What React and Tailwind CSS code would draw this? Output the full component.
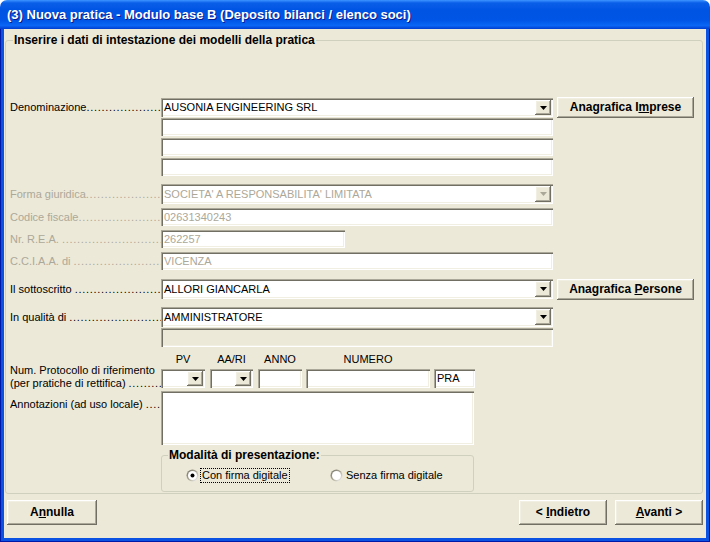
import React from "react";

const dots = ".".repeat(60);

const sunken =
  "shadow-[inset_1px_1px_0_#aca899,inset_2px_2px_0_#716f64,inset_-1px_-1px_0_#ffffff,inset_-2px_-2px_0_#f1efe2]";
const raised =
  "bg-[#ece9d8] shadow-[inset_-1px_-1px_0_#716f64,inset_1px_1px_0_#ffffff,inset_-2px_-2px_0_#aca899,inset_2px_2px_0_#f1efe2]";

const Label = ({ children, disabled }) => (
  <div
    className={`w-[151px] shrink-0 overflow-hidden whitespace-nowrap ${
      disabled ? "text-[#aca899]" : "text-black"
    }`}
  >
    {children}
    <span className="tracking-[0.7px]">{dots}</span>
  </div>
);

const Input = ({ className = "", value, disabled }) => (
  <div
    className={`flex items-center overflow-hidden whitespace-nowrap pl-[3px] ${sunken} ${
      disabled ? "text-[#aca899]" : "text-black"
    } ${className}`}
  >
    {value}
  </div>
);

const DropBtn = ({ disabled }) => (
  <div className={`flex w-[16px] shrink-0 items-center justify-center ${raised}`}>
    <svg width="7" height="4" viewBox="0 0 7 4">
      <polygon points="0,0 7,0 3.5,4" fill={disabled ? "#aca899" : "#000000"} />
    </svg>
  </div>
);

const Combo = ({ className = "", value, disabled }) => (
  <div className={`flex items-stretch bg-white p-[2px] ${sunken} ${className}`}>
    <div
      className={`flex min-w-0 flex-1 items-center overflow-hidden whitespace-nowrap pl-[1px] ${
        disabled ? "text-[#aca899]" : "text-black"
      }`}
    >
      {value}
    </div>
    <DropBtn disabled={disabled} />
  </div>
);

const Button = ({ className = "", children }) => (
  <button
    className={`flex items-center justify-center whitespace-pre text-[12px] font-bold text-black ${raised} ${className}`}
  >
    <span>{children}</span>
  </button>
);

const Radio = ({ checked }) => (
  <svg width="13" height="13" viewBox="0 0 13 13" className="shrink-0">
    <defs>
      <linearGradient id={checked ? "rg1" : "rg2"} x1="0" y1="0" x2="1" y2="1">
        <stop offset="0" stopColor="#716f64" />
        <stop offset="0.5" stopColor="#aca899" />
        <stop offset="1" stopColor="#ffffff" />
      </linearGradient>
    </defs>
    <circle cx="6.5" cy="6.5" r="6" fill={`url(#${checked ? "rg1" : "rg2"})`} />
    <circle cx="6.5" cy="6.5" r="4.5" fill="#ffffff" />
    {checked && <circle cx="6.5" cy="6.5" r="2" fill="#000000" />}
  </svg>
);

const Spacer = () => <div className="w-[151px] shrink-0" />;

export default function App() {
  return (
    <div className="flex h-[542px] w-[710px] flex-col font-['Liberation_Sans',Arial,sans-serif] text-[11px] leading-[13px]">
      {/* title bar */}
      <div className="flex h-[29px] shrink-0 items-center rounded-t-[7px] bg-[linear-gradient(to_bottom,#3d95ff_0%,#0a5fe8_10%,#0054e3_35%,#0055e6_70%,#0a66f5_88%,#003dd0_100%)] pl-[7px] text-[13px] font-bold text-white [text-shadow:1px_1px_0_#0a1a8a]">
        (3) Nuova pratica - Modulo base B (Deposito bilanci / elenco soci)
      </div>

      <div className="flex flex-1 bg-[#0b52e3] px-[4px] pb-[4px] shadow-[inset_1px_0_0_#0019a6,inset_-1px_0_0_#0019a6,inset_0_-1px_0_#0019a6]">
        <div className="flex flex-1 flex-col bg-[#ece9d8]">
          <fieldset className="ml-[1px] mt-[5px] h-[460px] w-[698px] rounded-[3px] border border-[#d0d0bf] pl-[4px] pt-[51px]">
            <legend className="ml-[3px] px-[1px] text-[12px] font-bold leading-[13px]">
              Inserire i dati di intestazione dei modelli della pratica
            </legend>

            {/* Denominazione */}
            <div className="flex h-[19px] items-center">
              <Label>Denominazione</Label>
              <Combo className="h-[19px] w-[392px]" value="AUSONIA ENGINEERING SRL" />
              <Button className="ml-[4px] h-[21px] w-[137px]">
                Anagrafica I<span className="underline">m</span>prese
              </Button>
            </div>
            <div className="mt-[1px] flex">
              <Spacer />
              <Input className="h-[18px] w-[392px] bg-white" />
            </div>
            <div className="mt-[2px] flex">
              <Spacer />
              <Input className="h-[18px] w-[392px] bg-white" />
            </div>
            <div className="mt-[2px] flex">
              <Spacer />
              <Input className="h-[18px] w-[392px] bg-white" />
            </div>

            {/* disabled company data */}
            <div className="mt-[8px] flex h-[20px] items-center">
              <Label disabled>Forma giuridica</Label>
              <Combo disabled className="h-[20px] w-[392px]" value="SOCIETA' A RESPONSABILITA' LIMITATA" />
            </div>
            <div className="mt-[4px] flex h-[18px] items-center">
              <Label disabled>Codice fiscale</Label>
              <Input disabled className="h-[18px] w-[392px] bg-white" value="02631340243" />
            </div>
            <div className="mt-[4px] flex h-[18px] items-center">
              <Label disabled>Nr. R.E.A. </Label>
              <Input disabled className="h-[18px] w-[184px] bg-white" value="262257" />
            </div>
            <div className="mt-[4px] flex h-[18px] items-center">
              <Label disabled>C.C.I.A.A. di </Label>
              <Input disabled className="h-[18px] w-[392px] bg-white" value="VICENZA" />
            </div>

            {/* sottoscritto */}
            <div className="mt-[9px] flex h-[20px] items-center">
              <Label>Il sottoscritto </Label>
              <Combo className="h-[20px] w-[392px]" value="ALLORI GIANCARLA" />
              <Button className="ml-[4px] h-[21px] w-[137px]">
                Anagrafica <span className="underline">P</span>ersone
              </Button>
            </div>
            <div className="mt-[8px] flex h-[20px] items-center">
              <Label>In qualità di </Label>
              <Combo className="h-[20px] w-[392px]" value="AMMINISTRATORE" />
            </div>
            <div className="mt-[1px] flex">
              <Spacer />
              <Input className="h-[19px] w-[392px] bg-[#ece9d8]" />
            </div>

            {/* protocollo */}
            <div className="mt-[6px] flex items-end">
              <div className="-mb-[2px] w-[151px] shrink-0 overflow-hidden whitespace-nowrap">
                <div>Num. Protocollo di riferimento</div>
                <div>
                  (per pratiche di rettifica) <span className="tracking-[0.7px]">{dots}</span>
                </div>
              </div>
              <div className="flex flex-col">
                <div className="flex h-[12px] items-center text-center leading-[12px]">
                  <div className="w-[44px]">PV</div>
                  <div className="ml-[5px] w-[43px]">AA/RI</div>
                  <div className="ml-[5px] w-[44px]">ANNO</div>
                  <div className="ml-[4px] w-[124px]">NUMERO</div>
                  <div className="ml-[4px] w-[41px]" />
                </div>
                <div className="mt-[4px] flex h-[19px]">
                  <Combo className="h-[19px] w-[44px]" />
                  <Combo className="ml-[5px] h-[19px] w-[43px]" />
                  <Input className="ml-[5px] h-[19px] w-[44px] bg-white" />
                  <Input className="ml-[4px] h-[19px] w-[124px] bg-white" />
                  <Input className="ml-[4px] h-[19px] w-[41px] bg-white" value="PRA" />
                </div>
              </div>
            </div>

            {/* annotazioni */}
            <div className="mt-[3px] flex">
              <div className="pt-[7px]">
                <Label>Annotazioni (ad uso locale) </Label>
              </div>
              <div className={`h-[54px] w-[313px] bg-white ${sunken}`} />
            </div>

            {/* modalità */}
            <div className="flex">
              <Spacer />
              <fieldset className="mt-[4px] h-[43px] w-[313px] rounded-[3px] border border-[#d0d0bf]">
                <legend className="ml-[6px] px-[1px] text-[12px] font-bold leading-[13px]">
                  Modalità di presentazione:
                </legend>
                <div className="mt-[5px] flex h-[16px] items-center pl-[24px]">
                  <div className="flex w-[144px] items-center">
                    <Radio checked />
                    <span className="ml-[1px] border border-dotted border-black px-[1px] leading-[13px]">
                      Con firma digitale
                    </span>
                  </div>
                  <div className="flex items-center">
                    <Radio />
                    <span className="ml-[3px]">Senza firma digitale</span>
                  </div>
                </div>
              </fieldset>
            </div>
          </fieldset>

          {/* bottom buttons */}
          <div className="mt-[6px] flex h-[25px] justify-between px-[3px]">
            <Button className="h-[25px] w-[90px]">
              A<span className="underline">n</span>nulla
            </Button>
            <div className="flex gap-[8px]">
              <Button className="h-[25px] w-[88px]">
                &lt; <span className="underline">I</span>ndietro
              </Button>
              <Button className="h-[25px] w-[88px]">
                <span className="underline">A</span>vanti &gt;
              </Button>
            </div>
          </div>
        </div>
      </div>
    </div>
  );
}
